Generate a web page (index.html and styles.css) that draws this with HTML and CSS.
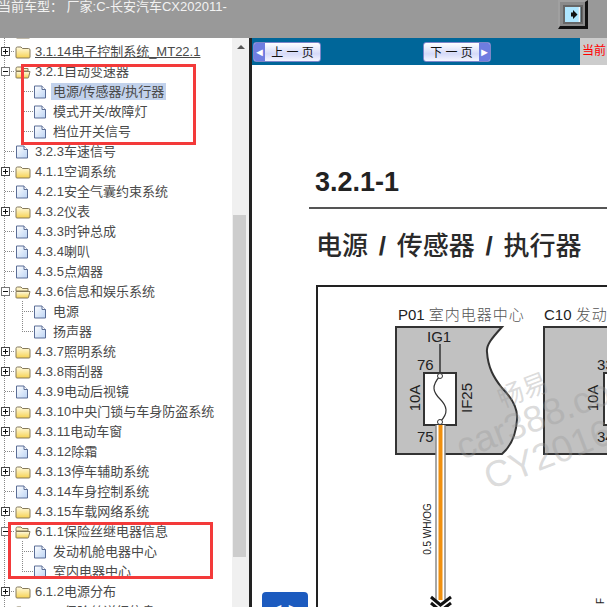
FILE: index.html
```html
<!DOCTYPE html>
<html lang="zh-CN">
<head>
  <meta charset="UTF-8">
  <meta name="viewport" content="width=device-width, initial-scale=1.0">
  <title>维修手册</title>
  <link rel="stylesheet" href="styles.css">
</head>
<body>

<svg class="defs" width="0" height="0">
  <defs>
    <linearGradient id="folderFill" x1="0" y1="0" x2="0" y2="1">
      <stop offset="0" stop-color="#fffbe2"/>
      <stop offset="1" stop-color="#f6d252"/>
    </linearGradient>
    <linearGradient id="fileFill" x1="0" y1="0" x2="1" y2="1">
      <stop offset="0" stop-color="#ffffff"/>
      <stop offset="1" stop-color="#bcd4f4"/>
    </linearGradient>
    <symbol id="folder" viewBox="0 0 16 14">
      <path d="M1 3.5 Q1 2 2.5 2 H6 L7.5 3.5 H13.5 Q15 3.5 15 5 V12 Q15 13 14 13 H2 Q1 13 1 12 Z" fill="url(#folderFill)" stroke="#85795a"/>
    </symbol>
    <symbol id="folderOpen" viewBox="0 0 16 14">
      <path d="M1 3.5 Q1 2 2.5 2 H6 L7.5 3.5 H13 V6 H1 Z" fill="#fdf3c4" stroke="#85795a"/>
      <path d="M1 12.5 V6.5 H15 L13.5 12.5 Q13.3 13 12.8 13 H2 Q1 13 1 12.5 Z" fill="url(#folderFill)" stroke="#85795a"/>
    </symbol>
    <symbol id="file" viewBox="0 0 16 14">
      <path d="M1.5 1 H9 L12.5 4.5 V13 H1.5 Z" fill="url(#fileFill)" stroke="#5a6d96"/>
      <path d="M9 1 V4.5 H12.5" fill="#fff" stroke="#5a6d96"/>
    </symbol>
  </defs>
</svg>

<header class="topbar">
  <div class="car-info">当前车型：&nbsp;厂家:C-长安汽车CX202011-</div>
  <button class="toggle-frame" type="button">
    <svg width="20" height="19" viewBox="0 0 20 19">
      <rect x="1" y="1" width="18" height="17" fill="#aee6ff" stroke="#666" stroke-width="2"/>
      <path d="M16.5 2 V17" stroke="#f4f4f4" stroke-width="1.5"/>
      <path d="M18 2 V17" stroke="#333"/>
      <path d="M8 7.5 H10 V5 L14.5 9.5 L10 14 V11.5 H8 Z" fill="#111"/>
    </svg>
  </button>
</header>

<main class="layout">
  <nav class="side">
    <div class="tree">
      <div class="row clipped"><span class="gutter"></span><svg class="ico"><use href="#folder"/></svg></div>
      <div class="row"><span class="gutter"><i class="box plus"></i></span><svg class="ico"><use href="#folder"/></svg><a class="lbl hover">3.1.14电子控制系统_MT22.1</a></div>
      <div class="row"><span class="gutter"><i class="box minus"></i></span><svg class="ico"><use href="#folderOpen"/></svg><a class="lbl">3.2.1自动变速器</a></div>
      <div class="row child"><span class="gutter"></span><svg class="ico"><use href="#file"/></svg><a class="lbl selected">电源/传感器/执行器</a></div>
      <div class="row child"><span class="gutter"></span><svg class="ico"><use href="#file"/></svg><a class="lbl">模式开关/故障灯</a></div>
      <div class="row child last"><span class="gutter"></span><svg class="ico"><use href="#file"/></svg><a class="lbl">档位开关信号</a></div>
      <div class="row"><span class="gutter"></span><svg class="ico"><use href="#file"/></svg><a class="lbl">3.2.3车速信号</a></div>
      <div class="row"><span class="gutter"><i class="box plus"></i></span><svg class="ico"><use href="#folder"/></svg><a class="lbl">4.1.1空调系统</a></div>
      <div class="row"><span class="gutter"></span><svg class="ico"><use href="#file"/></svg><a class="lbl">4.2.1安全气囊约束系统</a></div>
      <div class="row"><span class="gutter"><i class="box plus"></i></span><svg class="ico"><use href="#folder"/></svg><a class="lbl">4.3.2仪表</a></div>
      <div class="row"><span class="gutter"></span><svg class="ico"><use href="#file"/></svg><a class="lbl">4.3.3时钟总成</a></div>
      <div class="row"><span class="gutter"></span><svg class="ico"><use href="#file"/></svg><a class="lbl">4.3.4喇叭</a></div>
      <div class="row"><span class="gutter"></span><svg class="ico"><use href="#file"/></svg><a class="lbl">4.3.5点烟器</a></div>
      <div class="row"><span class="gutter"><i class="box minus"></i></span><svg class="ico"><use href="#folderOpen"/></svg><a class="lbl">4.3.6信息和娱乐系统</a></div>
      <div class="row child"><span class="gutter"></span><svg class="ico"><use href="#file"/></svg><a class="lbl">电源</a></div>
      <div class="row child last"><span class="gutter"></span><svg class="ico"><use href="#file"/></svg><a class="lbl">扬声器</a></div>
      <div class="row"><span class="gutter"><i class="box plus"></i></span><svg class="ico"><use href="#folder"/></svg><a class="lbl">4.3.7照明系统</a></div>
      <div class="row"><span class="gutter"><i class="box plus"></i></span><svg class="ico"><use href="#folder"/></svg><a class="lbl">4.3.8雨刮器</a></div>
      <div class="row"><span class="gutter"></span><svg class="ico"><use href="#file"/></svg><a class="lbl">4.3.9电动后视镜</a></div>
      <div class="row"><span class="gutter"><i class="box plus"></i></span><svg class="ico"><use href="#folder"/></svg><a class="lbl">4.3.10中央门锁与车身防盗系统</a></div>
      <div class="row"><span class="gutter"><i class="box plus"></i></span><svg class="ico"><use href="#folder"/></svg><a class="lbl">4.3.11电动车窗</a></div>
      <div class="row"><span class="gutter"></span><svg class="ico"><use href="#file"/></svg><a class="lbl">4.3.12除霜</a></div>
      <div class="row"><span class="gutter"><i class="box plus"></i></span><svg class="ico"><use href="#folder"/></svg><a class="lbl">4.3.13停车辅助系统</a></div>
      <div class="row"><span class="gutter"></span><svg class="ico"><use href="#file"/></svg><a class="lbl">4.3.14车身控制系统</a></div>
      <div class="row"><span class="gutter"><i class="box plus"></i></span><svg class="ico"><use href="#folder"/></svg><a class="lbl">4.3.15车载网络系统</a></div>
      <div class="row"><span class="gutter"><i class="box minus"></i></span><svg class="ico"><use href="#folderOpen"/></svg><a class="lbl">6.1.1保险丝继电器信息</a></div>
      <div class="row child"><span class="gutter"></span><svg class="ico"><use href="#file"/></svg><a class="lbl">发动机舱电器中心</a></div>
      <div class="row child last"><span class="gutter"></span><svg class="ico"><use href="#file"/></svg><a class="lbl">室内电器中心</a></div>
      <div class="row"><span class="gutter"><i class="box plus"></i></span><svg class="ico"><use href="#folder"/></svg><a class="lbl">6.1.2电源分布</a></div>
      <div class="row"><span class="gutter"><i class="box plus"></i></span><svg class="ico"><use href="#folder"/></svg><a class="lbl">6.1.3保险丝详细信息</a></div>

      <!-- red marks drawn over the tree -->
      <div class="mark mark-a"></div>
      <div class="mark mark-b"></div>
    </div>
    <div class="scrollbar">
      <span class="arrow-up"></span>
      <div class="thumb"></div>
    </div>
  </nav>

  <section class="content">
    <div class="pager">
      <div class="pager-bar">
        <button class="page-btn prev" type="button"><span class="cap">&#9668;</span><span class="cap-text">上 一 页</span></button>
        <button class="page-btn next" type="button"><span class="cap-text">下 一 页</span><span class="cap">&#9658;</span></button>
      </div>
      <div class="pager-cell">当前</div>
    </div>

    <article class="doc">
      <h1 class="doc-no">3.2.1-1</h1>
      <h2 class="doc-title">电源 <b>/</b> 传感器 <b>/</b> 执行器</h2>
      <svg class="diagram" width="291" height="322" viewBox="316 285 291 322">
        <rect x="317" y="286" width="320" height="400" fill="#fff" stroke="#222" stroke-width="2"/>

        <text class="cap-label" x="398" y="320">P01 <tspan class="cjk">室内电器中心</tspan></text>
        <text class="cap-label" x="544" y="320">C10 <tspan class="cjk">发动机舱电器中心</tspan></text>

        <path d="M396 327 H502 C492 338 486 345 487 352 C488 368 494 378 502 388 C512 398 518 410 517 420 C516 435 510 447 502 454 H396 Z" fill="#c1c1c1" stroke="#333" stroke-width="2"/>
        <rect x="544" y="327" width="80" height="127" fill="#c1c1c1" stroke="#333" stroke-width="2"/>

        <text class="pin" x="427" y="342">IG1</text>
        <path d="M440 344 V374" stroke="#333" stroke-width="1.5"/>
        <text class="pin" x="417" y="370">76</text>
        <text class="pin" x="417" y="442">75</text>
        <rect x="424" y="373" width="32" height="52" fill="#fff" stroke="#333" stroke-width="2"/>
        <path d="M440 376 C431 386 433 392 440 399 C447 406 449 413 440 422" fill="none" stroke="#333" stroke-width="1.2"/>
        <circle cx="440" cy="376" r="2.5" fill="#fff" stroke="#333"/>
        <circle cx="440" cy="422" r="2.5" fill="#fff" stroke="#333"/>
        <text class="pin" transform="translate(420 398) rotate(-90)" text-anchor="middle">10A</text>
        <text class="pin" transform="translate(472 398) rotate(-90)" text-anchor="middle">IF25</text>

        <text class="pin" x="597" y="370">33</text>
        <text class="pin" x="597" y="442">34</text>
        <rect x="604" y="373" width="32" height="52" fill="#fff" stroke="#333" stroke-width="2"/>
        <text class="pin" transform="translate(598 398) rotate(-90)" text-anchor="middle">10A</text>

        <rect x="436" y="425" width="9" height="175" fill="#fff"/>
        <path d="M436 425 V600 M445 425 V600" stroke="#8a8a8a" stroke-width="1.5"/>
        <path d="M440.5 425 V600" stroke="#f0900f" stroke-width="4"/>
        <path d="M431 597 L440.5 605 L451 597" fill="none" stroke="#111" stroke-width="3"/>
        <path d="M431 603 L440.5 611 L451 603" fill="none" stroke="#111" stroke-width="3"/>
        <text class="wire" transform="translate(431 529) rotate(-90)" text-anchor="middle">0.5 WH/OG</text>
        <text class="wire" transform="translate(604 604) rotate(-90)">F</text>

        <g class="watermark">
          <text transform="translate(502 408) rotate(-21)" font-size="26">畅易</text>
          <text transform="translate(462 460) rotate(-21)" font-size="37">car388.com</text>
          <text transform="translate(490 490) rotate(-21)" font-size="37">CY20165</text>
        </g>
      </svg>
    </article>

    <button class="float-nav" type="button">&lt; &gt;</button>
  </section>
</main>

</body>
</html>
```

FILE: styles.css
```css
html, body {
  margin: 0;
  padding: 0;
  height: 100%;
  overflow: hidden;
}
body {
  font-family: "Liberation Sans", "Noto Sans CJK SC", sans-serif;
  font-size: 13px;
  color: #444;
  background-color: #fff;
  display: flex;
  flex-direction: column;
}
.defs {
  position: absolute;
}

/* top bar */
.topbar {
  height: 38px;
  flex: none;
  background-color: #999;
  display: flex;
  justify-content: space-between;
  align-items: flex-start;
}
.car-info {
  margin-left: -2px;
  line-height: 13px;
  color: #f2f2f2;
  white-space: nowrap;
}
.toggle-frame {
  width: 30px;
  height: 29px;
  margin-right: 19px;
  padding: 0;
  background-color: #8a8a8a;
  border: 2px solid #a0a0a0;
  border-right: 3px solid #111;
  border-bottom: 3px solid #111;
  box-sizing: border-box;
  display: flex;
  align-items: center;
  justify-content: center;
}

.layout {
  flex: 1;
  min-height: 0;
  display: flex;
}

/* left tree */
.side {
  width: 252px;
  flex: none;
  display: flex;
  border-right: 3px solid #222;
  box-sizing: border-box;
}
.tree {
  width: 232px;
  flex: none;
  position: relative;
  overflow: hidden;
  padding-top: 3px;
  box-sizing: border-box;
  background: repeating-linear-gradient(180deg, #888 0 1px, transparent 1px 2px) 4px 0 / 1px 100% no-repeat;
}
.row {
  height: 20px;
  display: flex;
  align-items: center;
  white-space: nowrap;
}
.row.clipped {
  margin-top: -20px;
}
.gutter {
  width: 15px;
  height: 20px;
  flex: none;
  display: flex;
  align-items: center;
  background: repeating-linear-gradient(90deg, #888 0 1px, transparent 1px 2px) 5px 10px / 10px 1px no-repeat;
}
.row.child {
  padding-left: 22px;
  background: repeating-linear-gradient(180deg, #888 0 1px, transparent 1px 2px) 22px 0 / 1px 100% no-repeat;
}
.row.child.last {
  background-size: 1px 50%;
}
.row.child .gutter {
  width: 11px;
  background-position: 0 10px;
  background-size: 11px 1px;
}
.ico {
  width: 16px;
  height: 14px;
  flex: none;
  margin-top: 2px;
}
.lbl {
  margin-left: 2px;
  padding: 0 2px;
  line-height: 17px;
  color: #4a4a4a;
}
.lbl.hover {
  text-decoration: underline;
}
.lbl.selected {
  background-color: #c2d2ec;
}
.box {
  width: 7px;
  height: 7px;
  margin-left: 1px;
  border: 1px solid #777;
  background-color: #fff;
  position: relative;
  display: block;
}
.box::before {
  content: "";
  position: absolute;
  left: 1px;
  top: 3px;
  width: 5px;
  height: 1px;
  background-color: #111;
}
.box.plus {
  border-color: #444;
}
.box.plus::after {
  content: "";
  position: absolute;
  left: 3px;
  top: 1px;
  width: 1px;
  height: 5px;
  background-color: #111;
}
.mark {
  position: absolute;
  border: 3px solid #f33a3a;
  box-sizing: border-box;
}
.mark-a {
  left: 21px;
  top: 26px;
  width: 175px;
  height: 81px;
}
.mark-b {
  left: 8px;
  top: 484px;
  width: 205px;
  height: 57px;
}

.scrollbar {
  width: 17px;
  flex: none;
  background-color: #f0f0f0;
  position: relative;
}
.arrow-up {
  position: absolute;
  left: 5px;
  top: 7px;
  border-left: 4px solid transparent;
  border-right: 4px solid transparent;
  border-bottom: 4px solid #555;
}
.thumb {
  position: absolute;
  left: 1px;
  top: 177px;
  width: 13px;
  height: 342px;
  background-color: #cdcdcd;
}

/* right side */
.content {
  flex: 1;
  min-width: 0;
  position: relative;
  display: flex;
  flex-direction: column;
}
.pager {
  height: 27px;
  flex: none;
  display: flex;
}
.pager-bar {
  flex: 1;
  background-color: #006699;
  display: flex;
  align-items: center;
  padding-left: 1px;
}
.pager-cell {
  width: 27px;
  background-color: #ccc;
  color: #f00;
  font-size: 12px;
  line-height: 27px;
  padding-left: 2px;
  white-space: nowrap;
  overflow: hidden;
  box-sizing: border-box;
}
.page-btn {
  width: 68px;
  height: 20px;
  padding: 0;
  border: 1px solid #7d86c9;
  border-radius: 3px;
  background: linear-gradient(180deg, #fff, #d5daf8 60%, #f4f5ff);
  display: flex;
  align-items: center;
  font-family: "Liberation Sans", "Noto Sans CJK SC", sans-serif;
  font-size: 12px;
  color: #111;
  overflow: hidden;
}
.page-btn.next {
  margin-left: 102px;
}
.cap {
  width: 11px;
  height: 100%;
  flex: none;
  background-color: #6f7de0;
  color: #fff;
  font-size: 11px;
  line-height: 18px;
}
.cap-text {
  flex: 1;
  text-align: center;
  white-space: nowrap;
}

.doc {
  flex: 1;
  min-height: 0;
  overflow: hidden;
  padding-left: 57px;
}
.doc-no {
  margin: 100px 0 0 6px;
  font-size: 27px;
  font-weight: bold;
  line-height: 34px;
  color: #222;
}
.doc-title {
  margin: 8px 0 0;
  padding: 8px 0 10px 7px;
  border-top: 2px solid #555;
  font-size: 26px;
  font-weight: 500;
  word-spacing: 3.5px;
  line-height: 58px;
  color: #2a2a2a;
  white-space: nowrap;
}
.diagram {
  display: block;
  margin: 0 0 0 7px;
}
.cap-label {
  font-size: 15px;
  fill: #222;
}
.cap-label .cjk {
  font-family: "Noto Sans CJK SC", sans-serif;
  font-size: 15px;
  letter-spacing: 1px;
  font-weight: 300;
  fill: #555;
}
.pin {
  font-size: 15px;
  fill: #222;
}
.wire {
  font-size: 10px;
  fill: #222;
}
.watermark text {
  fill: #9a9a9a;
  fill-opacity: 0.35;
}
.float-nav {
  position: absolute;
  left: 10px;
  bottom: -4px;
  width: 46px;
  height: 19px;
  padding: 8px 0 0;
  box-sizing: border-box;
  border: 0;
  border-radius: 4px;
  background-color: #1c5bbf;
  color: #fff;
  font-size: 20px;
  line-height: 20px;
  overflow: hidden;
}
```
